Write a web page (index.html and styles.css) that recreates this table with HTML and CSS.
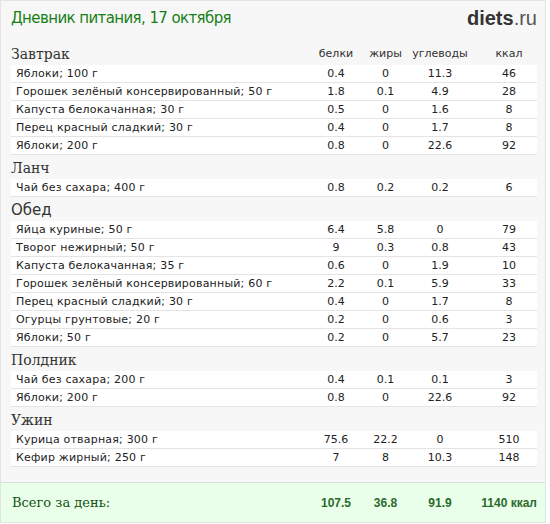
FILE: index.html
```html
<!DOCTYPE html>
<html lang="ru">
<head>
<meta charset="utf-8">
<title>Дневник питания</title>
<link rel="stylesheet" href="styles.css">
</head>
<body>
<div class="page">
  <div class="top">
    <div class="title">Дневник питания, 17 октября</div>
    <div class="logo"><b>diets</b>.ru</div>
  </div>

  <div class="head">
    <div class="meal serif">Завтрак</div>
    <div class="col">белки</div>
    <div class="col">жиры</div>
    <div class="col">углеводы</div>
    <div class="col kcal">ккал</div>
  </div>
  <div class="row"><div class="name">Яблоки; 100 г</div><div class="col">0.4</div><div class="col">0</div><div class="col">11.3</div><div class="col kcal">46</div></div>
  <div class="row"><div class="name">Горошек зелёный консервированный; 50 г</div><div class="col">1.8</div><div class="col">0.1</div><div class="col">4.9</div><div class="col kcal">28</div></div>
  <div class="row"><div class="name">Капуста белокачанная; 30 г</div><div class="col">0.5</div><div class="col">0</div><div class="col">1.6</div><div class="col kcal">8</div></div>
  <div class="row"><div class="name">Перец красный сладкий; 30 г</div><div class="col">0.4</div><div class="col">0</div><div class="col">1.7</div><div class="col kcal">8</div></div>
  <div class="row"><div class="name">Яблоки; 200 г</div><div class="col">0.8</div><div class="col">0</div><div class="col">22.6</div><div class="col kcal">92</div></div>

  <div class="head"><div class="meal serif">Ланч</div></div>
  <div class="row"><div class="name">Чай без сахара; 400 г</div><div class="col">0.8</div><div class="col">0.2</div><div class="col">0.2</div><div class="col kcal">6</div></div>

  <div class="head"><div class="meal sans">Обед</div></div>
  <div class="row"><div class="name">Яйца куриные; 50 г</div><div class="col">6.4</div><div class="col">5.8</div><div class="col">0</div><div class="col kcal">79</div></div>
  <div class="row"><div class="name">Творог нежирный; 50 г</div><div class="col">9</div><div class="col">0.3</div><div class="col">0.8</div><div class="col kcal">43</div></div>
  <div class="row"><div class="name">Капуста белокачанная; 35 г</div><div class="col">0.6</div><div class="col">0</div><div class="col">1.9</div><div class="col kcal">10</div></div>
  <div class="row"><div class="name">Горошек зелёный консервированный; 60 г</div><div class="col">2.2</div><div class="col">0.1</div><div class="col">5.9</div><div class="col kcal">33</div></div>
  <div class="row"><div class="name">Перец красный сладкий; 30 г</div><div class="col">0.4</div><div class="col">0</div><div class="col">1.7</div><div class="col kcal">8</div></div>
  <div class="row"><div class="name">Огурцы грунтовые; 20 г</div><div class="col">0.2</div><div class="col">0</div><div class="col">0.6</div><div class="col kcal">3</div></div>
  <div class="row"><div class="name">Яблоки; 50 г</div><div class="col">0.2</div><div class="col">0</div><div class="col">5.7</div><div class="col kcal">23</div></div>

  <div class="head"><div class="meal serif">Полдник</div></div>
  <div class="row"><div class="name">Чай без сахара; 200 г</div><div class="col">0.4</div><div class="col">0.1</div><div class="col">0.1</div><div class="col kcal">3</div></div>
  <div class="row"><div class="name">Яблоки; 200 г</div><div class="col">0.8</div><div class="col">0</div><div class="col">22.6</div><div class="col kcal">92</div></div>

  <div class="head"><div class="meal serif">Ужин</div></div>
  <div class="row"><div class="name">Курица отварная; 300 г</div><div class="col">75.6</div><div class="col">22.2</div><div class="col">0</div><div class="col kcal">510</div></div>
  <div class="row"><div class="name">Кефир жирный; 250 г</div><div class="col">7</div><div class="col">8</div><div class="col">10.3</div><div class="col kcal">148</div></div>

  <div class="total">
    <div class="total-label">Всего за день:</div>
    <div class="col">107.5</div>
    <div class="col">36.8</div>
    <div class="col">91.9</div>
    <div class="col tkcal">1140 ккал</div>
  </div>
</div>
</body>
</html>
```

FILE: styles.css
```css
html, body {
  margin: 0;
  padding: 0;
  background: #ffffff;
}

.page {
  width: 544px;
  border: 1px solid #e3e3e3;
  background: #f7f7f7;
  font-family: "DejaVu Sans", Verdana, sans-serif;
}

.top {
  height: 40px;
  display: flex;
  justify-content: space-between;
  align-items: center;
  padding: 0 8px 6px 10px;
  box-sizing: border-box;
}

.title {
  font-size: 15px;
  letter-spacing: -0.6px;
  color: #168016;
}

.logo {
  font-family: "Liberation Sans", Arial, sans-serif;
  font-size: 20px;
  color: #555;
}

.logo b {
  color: #333;
  font-weight: bold;
}

.head,
.row,
.total {
  display: grid;
  grid-template-columns: 1fr 52px 47px 62px 66px;
  margin: 0 8px 0 10px;
}

.head {
  height: 24px;
  align-items: center;
  font-size: 11px;
  color: #333;
  padding-top: 1px;
  box-sizing: border-box;
}

.meal {
  font-size: 15px;
  color: #333;
  line-height: 18px;
}

.meal.serif {
  font-family: "DejaVu Serif", Georgia, serif;
  font-size: 14px;
}

.meal.sans {
  font-family: "DejaVu Sans", Verdana, sans-serif;
}

.col {
  text-align: center;
}

.kcal {
  padding-left: 10px;
}

.row {
  background: #ffffff;
  height: 18px;
  box-sizing: border-box;
  border-bottom: 1px solid #e4e4e4;
  font-size: 11px;
  line-height: 17px;
  color: #222;
}

.name {
  padding-left: 5px;
  white-space: nowrap;
  letter-spacing: 0.2px;
}

.total {
  margin: 15px 0 0 0;
  padding: 0 8px 0 10px;
  height: 40px;
  box-sizing: border-box;
  border-top: 1px solid #dcdcdc;
  background: #eaffea;
  align-items: center;
  font-family: "Liberation Sans", Arial, sans-serif;
  font-size: 12px;
  font-weight: bold;
  color: #2c6a2c;
}

.total-label {
  font-family: "DejaVu Serif", Georgia, serif;
  font-size: 13px;
  font-weight: normal;
  color: #125212;
  padding-left: 1px;
}

.tkcal {
  text-align: right;
}
```
